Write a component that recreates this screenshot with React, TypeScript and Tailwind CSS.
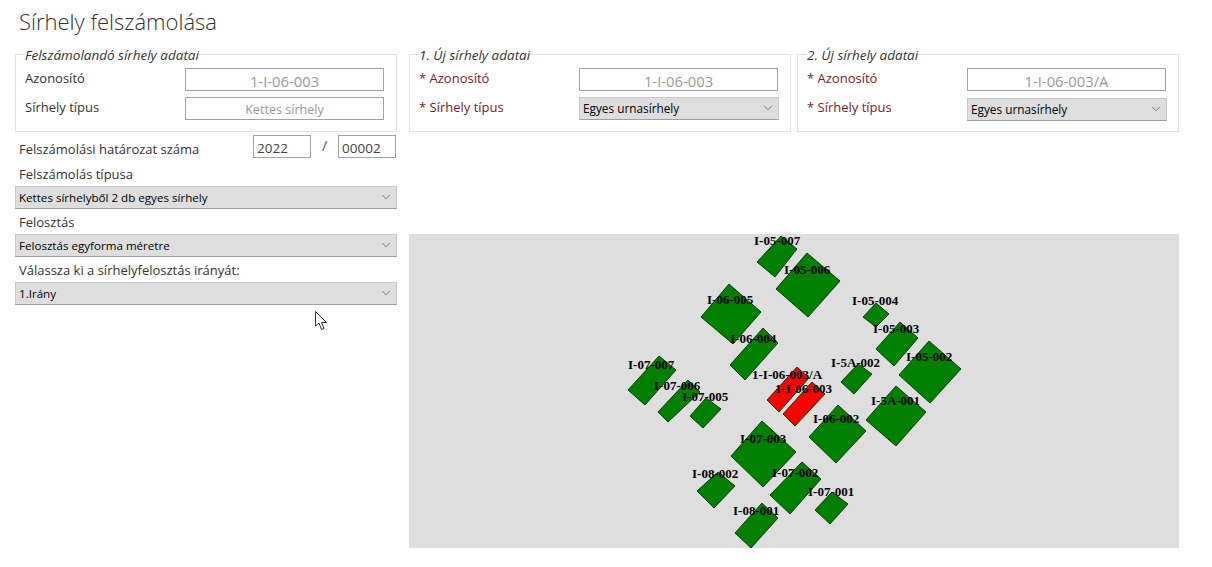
import { ChevronDown } from 'lucide-react';

type Plot = {
  label: string;
  points: string;
  x: number;
  y: number;
  red?: boolean;
};

const plots: Plot[] = [
  { label: 'I-05-007', points: '781,236 797,249 775,277 757,262', x: 754, y: 245 },
  { label: 'I-05-006', points: '807,253 840,281 808,317 776,289', x: 784, y: 274 },
  { label: 'I-06-005', points: '729,284 761,312 733,344 701,317', x: 707, y: 304 },
  { label: 'I-06-004', points: '763,328 778,343 745,380 730,365', x: 730, y: 343 },
  { label: 'I-05-004', points: '876,303 889,314 876,327 863,317', x: 852, y: 305 },
  { label: 'I-05-003', points: '900,322 918,338 894,366 876,349', x: 873, y: 333 },
  { label: 'I-05-002', points: '929,341 961,369 930,403 899,375', x: 906, y: 361 },
  { label: 'I-5A-002', points: '858,364 872,374 854,394 841,382', x: 831, y: 367 },
  { label: 'I-5A-001', points: '896,386 926,412 896,446 866,420', x: 871, y: 405 },
  { label: 'I-06-002', points: '838,405 866,431 836,463 809,437', x: 813, y: 423 },
  { label: 'I-07-003', points: '762,421 796,452 763,487 731,456', x: 740, y: 443 },
  { label: 'I-07-002', points: '802,462 821,479 790,514 770,495', x: 772, y: 477 },
  { label: 'I-07-001', points: '832,492 848,504 830,524 815,510', x: 808, y: 496 },
  { label: 'I-08-001', points: '762,503 778,518 751,548 735,533', x: 733, y: 515 },
  { label: 'I-08-002', points: '718,472 735,486 714,508 697,491', x: 692, y: 478 },
  { label: 'I-07-007', points: '659,356 676,370 645,405 628,390', x: 628, y: 369 },
  { label: 'I-07-006', points: '688,380 700,392 668,422 658,412', x: 654, y: 390 },
  { label: 'I-07-005', points: '706,398 721,409 703,428 690,416', x: 682, y: 401 },
  { label: '1-I-06-003/A', points: '797,367 809,378 779,412 767,400', x: 752, y: 379, red: true },
  { label: '1-I-06-003', points: '812,382 825,394 795,426 783,414', x: 775, y: 393, red: true },
];

const ReadOnlyBox = ({ value, className }: { value: string; className: string }) => (
  <input
    readOnly
    value={value}
    className={`block h-[23px] w-[199px] border border-[#a3a3a3] bg-white pt-[2px] text-center leading-[20px] text-[#9a9a9a] outline-none ${className}`}
  />
);

const SelectBox = ({ value, className, textClass }: { value: string; className: string; textClass: string }) => (
  <div className={`relative h-[23px] ${className}`}>
    <select
      defaultValue={value}
      className={`block h-full w-full appearance-none border border-[#c8c8c8] border-b-[#a0a0a0] bg-[#dedede] pl-[3px] pt-px font-['Open_Sans',sans-serif] text-black outline-none ${textClass}`}
    >
      <option>{value}</option>
    </select>
    <ChevronDown className="pointer-events-none absolute right-[4px] top-[4px] h-[14px] w-[14px] text-[#666]" strokeWidth={1.5} />
  </div>
);

const NewPlotBox = ({ title, id, selectClass }: { title: string; id: string; selectClass: string }) => (
  <fieldset className="w-[382px] border border-[#e2e2e2] pb-[11px] pl-[9px] pr-[12px] pt-[5px]">
    <legend className="h-[18px] pt-px text-[13.5px] italic leading-[18px] text-[#333]">{title}</legend>
    <div className="flex h-[23px] justify-between">
      <span className="pt-[1px] text-[13px] leading-[18px] text-[#741c2c]">* Azonosító</span>
      <ReadOnlyBox value={id} className="text-[14.8px]" />
    </div>
    <div className="mt-[6px] flex h-[23px] justify-between">
      <span className="pt-[1px] text-[13px] leading-[18px] text-[#741c2c]">* Sírhely típus</span>
      <SelectBox value="Egyes urnasírhely" className={`mr-[-1px] w-[200px] ${selectClass}`} textClass="text-[11.8px]" />
    </div>
  </fieldset>
);

const DropDown = ({ label, value, className = '' }: { label: string; value: string; className?: string }) => (
  <div className={className}>
    <div className="pb-[2px] pl-[4px] pt-[3px] text-[13px] leading-[20px] text-[#333]">{label}</div>
    <SelectBox value={value} className="w-[382px]" textClass="text-[11.6px]" />
  </div>
);

export default function App() {
  return (
    <div className="relative h-[567px] w-[1212px] overflow-hidden bg-white font-['Open_Sans',sans-serif]">
      <h1 className="h-[45px] pl-[19px] pt-[4px] text-[22px] font-light leading-[34px] text-[#333]">Sírhely felszámolása</h1>

      <div className="flex items-start gap-[12px] pl-[15px]">
        <div className="w-[382px]">
          <fieldset className="border border-[#e2e2e2] pb-[11px] pl-[9px] pr-[12px] pt-[5px]">
            <legend className="h-[18px] pt-px text-[13.5px] italic leading-[18px] text-[#333]">Felszámolandó sírhely adatai</legend>
            <div className="flex h-[23px] justify-between">
              <span className="pt-[1px] text-[13px] leading-[18px] text-[#333]">Azonosító</span>
              <ReadOnlyBox value="1-I-06-003" className="text-[14.8px]" />
            </div>
            <div className="mt-[6px] flex h-[23px] justify-between">
              <span className="pt-[1px] text-[13px] leading-[18px] text-[#333]">Sírhely típus</span>
              <ReadOnlyBox value="Kettes sírhely" className="text-[12.6px]" />
            </div>
          </fieldset>

          <div className="mt-[3px] flex h-[23px] items-center">
            <span className="w-[238px] pl-[4px] pt-[5px] text-[13px] leading-[20px] text-[#333]">Felszámolási határozat száma</span>
            <input readOnly value="2022" className="block h-[23px] w-[58px] border border-[#a3a3a3] pl-[3px] pt-[2px] text-[13.5px] text-[#444] outline-none" />
            <span className="w-[27px] pb-[3px] text-center text-[14px] text-[#555]">/</span>
            <input readOnly value="00002" className="block h-[23px] w-[58px] border border-[#a3a3a3] pl-[3px] pt-[2px] text-[13.5px] text-[#444] outline-none" />
          </div>

          <DropDown label="Felszámolás típusa" value="Kettes sírhelyből 2 db egyes sírhely" className="mt-[3px]" />
          <DropDown label="Felosztás" value="Felosztás egyforma méretre" />
          <DropDown label="Válassza ki a sírhelyfelosztás irányát:" value="1.Irány" />
        </div>

        <div className="w-[770px]">
          <div className="flex gap-[6px]">
            <NewPlotBox title="1. Új sírhely adatai" id="1-I-06-003" selectClass="" />
            <NewPlotBox title="2. Új sírhely adatai" id="1-I-06-003/A" selectClass="mt-px" />
          </div>
          <div className="mt-[102px] h-[314px] w-[770px] bg-[#dedede]">
            <svg viewBox="409 234 770 314" className="block h-full w-full">
              {plots.map((p) => (
                <polygon key={p.label} points={p.points} fill={p.red ? '#ff0000' : '#008000'} stroke="#0a3d0a" strokeWidth="1" />
              ))}
              {plots.map((p) => (
                <text
                  key={p.label}
                  x={p.x}
                  y={p.y}
                  fontFamily="'Liberation Serif', serif"
                  fontWeight="bold"
                  fontSize="13"
                  fill="#000"
                >
                  {p.label}
                </text>
              ))}
            </svg>
          </div>
        </div>
      </div>

      {/* mouse pointer caught in the screenshot */}
      <svg viewBox="0 0 13 21" className="absolute left-[315px] top-[311px] h-[21px] w-[13px]">
        <path d="M0.5 0.5 L0.5 15 L4 12 L6.5 18.5 L9 17.5 L6.5 11.5 L11.5 11.5 Z" fill="#fff" stroke="#333" strokeWidth="1" />
      </svg>
    </div>
  );
}
